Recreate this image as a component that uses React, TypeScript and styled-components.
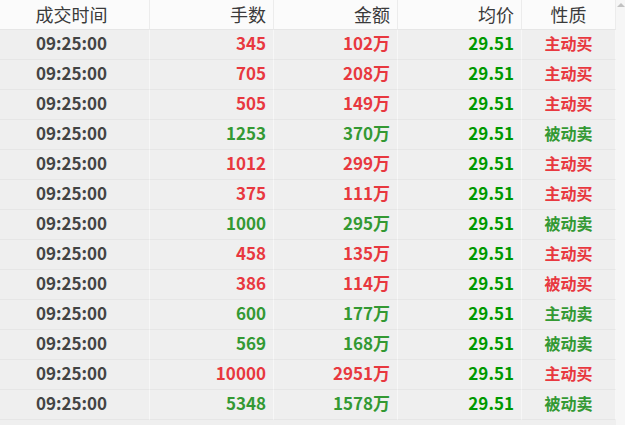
import React from 'react';
import styled, { createGlobalStyle } from 'styled-components';

const GlobalStyle = createGlobalStyle`
  html, body { margin: 0; padding: 0; background: #efefef; }
  body { font-family: "Noto Sans CJK SC", "Noto Sans", sans-serif; }
`;

type Trade = { time: string; vol: string; amount: string; price: string; kind: string };

const trades: Trade[] = [
  { time: '09:25:00', vol: '345', amount: '102万', price: '29.51', kind: '主动买' },
  { time: '09:25:00', vol: '705', amount: '208万', price: '29.51', kind: '主动买' },
  { time: '09:25:00', vol: '505', amount: '149万', price: '29.51', kind: '主动买' },
  { time: '09:25:00', vol: '1253', amount: '370万', price: '29.51', kind: '被动卖' },
  { time: '09:25:00', vol: '1012', amount: '299万', price: '29.51', kind: '主动买' },
  { time: '09:25:00', vol: '375', amount: '111万', price: '29.51', kind: '主动买' },
  { time: '09:25:00', vol: '1000', amount: '295万', price: '29.51', kind: '被动卖' },
  { time: '09:25:00', vol: '458', amount: '135万', price: '29.51', kind: '主动买' },
  { time: '09:25:00', vol: '386', amount: '114万', price: '29.51', kind: '被动买' },
  { time: '09:25:00', vol: '600', amount: '177万', price: '29.51', kind: '主动卖' },
  { time: '09:25:00', vol: '569', amount: '168万', price: '29.51', kind: '被动卖' },
  { time: '09:25:00', vol: '10000', amount: '2951万', price: '29.51', kind: '主动买' },
  { time: '09:25:00', vol: '5348', amount: '1578万', price: '29.51', kind: '被动卖' },
];

const RED = '#e8383f';
const GREEN = '#339933';
const PRICE_GREEN = '#009900';

type Align = 'center' | 'right' | 'middle';

const justify = (a?: Align) => (a === 'right' ? 'flex-end' : 'center');
const padRight = (a?: Align) => (a === 'right' ? 7 : a === 'middle' ? 0 : 6);

const Frame = styled.div`
  display: flex;
  width: 625px;
  height: 425px;
  overflow: hidden;
  background: #efefef;
`;

const Table = styled.div`
  display: grid;
  grid-template-columns: 150px 124px 124px 124px 94px;
  grid-auto-rows: 30px;
  align-content: start;
`;

const HeadCell = styled.div<{ $align?: Align }>`
  box-sizing: border-box;
  display: flex;
  align-items: center;
  justify-content: ${p => justify(p.$align)};
  padding: 0 ${p => padRight(p.$align)}px 2px 0;
  background: #fbfbfb;
  border-right: 1px solid #ececec;
  border-bottom: 1px solid #e6e6e6;
  font-size: 18px;
  color: #3a3a3a;
`;

const Cell = styled.div<{ $align?: Align; $color?: string; $size?: number }>`
  box-sizing: border-box;
  display: flex;
  align-items: center;
  justify-content: ${p => justify(p.$align)};
  padding: 0 ${p => padRight(p.$align)}px 4px 0;
  background: #efefef;
  border-right: 1px solid #f7f7f7;
  border-bottom: 1px solid #e6e6e6;
  font-size: ${p => p.$size ?? 17}px;
  font-weight: 700;
  color: ${p => p.$color ?? '#444'};
`;

const ScrollTrack = styled.div`
  position: relative;
  width: 9px;
  height: 100%;
  background: #f6f6f6;
`;

const ArrowUp = styled.div`
  position: absolute;
  top: 3px;
  left: 1px;
  width: 0;
  height: 0;
  border-left: 4px solid transparent;
  border-right: 4px solid transparent;
  border-bottom: 4px solid #c2c2c2;
`;

const sideColor = (kind: string) => (kind.endsWith('买') ? RED : GREEN);

export default function App() {
  return (
    <>
      <GlobalStyle />
      <Frame>
        <Table>
          <HeadCell>成交时间</HeadCell>
          <HeadCell $align="right">手数</HeadCell>
          <HeadCell $align="right">金额</HeadCell>
          <HeadCell $align="right">均价</HeadCell>
          <HeadCell $align="middle">性质</HeadCell>
          {trades.map((t, i) => {
            const c = sideColor(t.kind);
            return (
              <React.Fragment key={i}>
                <Cell>{t.time}</Cell>
                <Cell $align="right" $color={c}>{t.vol}</Cell>
                <Cell $align="right" $color={c}>{t.amount}</Cell>
                <Cell $align="right" $color={PRICE_GREEN}>{t.price}</Cell>
                <Cell $align="middle" $color={c} $size={16}>{t.kind}</Cell>
              </React.Fragment>
            );
          })}
        </Table>
        <ScrollTrack>
          <ArrowUp />
        </ScrollTrack>
      </Frame>
    </>
  );
}
